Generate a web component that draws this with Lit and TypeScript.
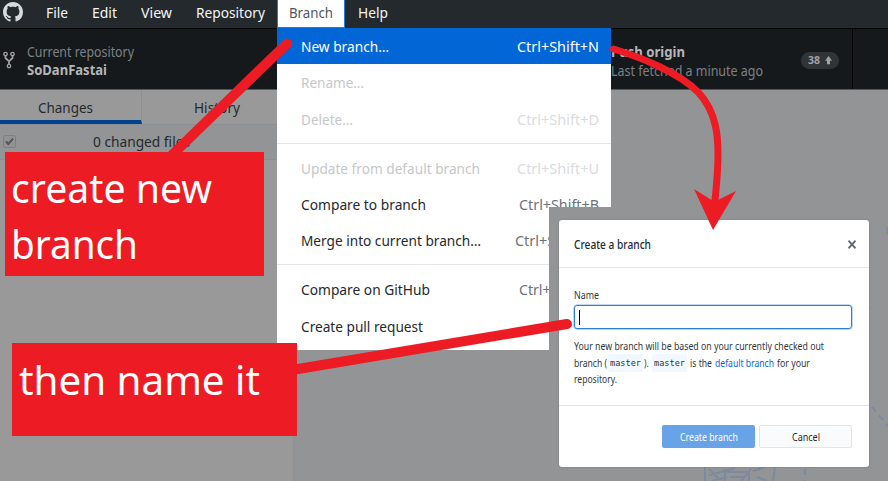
import { LitElement, html, css } from "lit";
import { customElement, property } from "lit/decorators.js";

/* A single-line label squeezed or stretched to a given width. */
@customElement("fit-text")
class FitText extends LitElement {
  @property({ type: Number }) w = 0;
  @property() text = "";
  static styles = css`
    :host { display: inline-block; white-space: pre; flex: none; }
    .t { display: inline-block; transform-origin: 0 50%; }
  `;
  render() {
    return html`<span class="t">${this.text}</span>`;
  }
  updated() {
    const t = this.renderRoot.querySelector(".t") as HTMLElement;
    t.style.transform = "none";
    const natural = t.getBoundingClientRect().width;
    this.style.width = `${this.w}px`;
    t.style.marginRight = `${this.w - natural}px`;
    t.style.transform = `scaleX(${this.w / natural})`;
  }
}

const ft = (text: string, w: number) => html`<fit-text .text=${text} .w=${w}></fit-text>`;

interface Item { label: string; w: number; key?: string; kw?: number; state?: string }

const groups: Item[][] = [
  [
    { label: "New branch…", w: 88, key: "Ctrl+Shift+N", kw: 82, state: "selected" },
    { label: "Rename…", w: 63, state: "disabled" },
    { label: "Delete…", w: 52, key: "Ctrl+Shift+D", kw: 82, state: "disabled" },
  ],
  [
    { label: "Update from default branch", w: 179, key: "Ctrl+Shift+U", kw: 82, state: "disabled" },
    { label: "Compare to branch", w: 125, key: "Ctrl+Shift+B", kw: 80 },
    { label: "Merge into current branch…", w: 180, key: "Ctrl+Shift+M", kw: 84 },
  ],
  [
    { label: "Compare on GitHub", w: 129, key: "Ctrl+Shift+G", kw: 80 },
    { label: "Create pull request", w: 122 },
  ],
];

@customElement("app-root")
class AppRoot extends LitElement {
  static styles = css`
    :host {
      display: block; position: relative; width: 888px; height: 481px; overflow: hidden;
      font-family: "Noto Sans", "Open Sans", sans-serif; font-size: 14px; line-height: 18px; color: #24292e;
    }
    .window { display: flex; flex-direction: column; height: 481px; background: #939495; }
    .menubar { display: flex; align-items: center; height: 28px; flex: none; background: #24292d; color: #f4f5f6; box-sizing: border-box; padding: 0 0 3px 3px; }
    .logo { width: 20px; height: 20px; margin: -2px 23px 0 0; fill: #d6dadf; }
    .menubar fit-text { margin-right: 24px; }
    .branch { align-self: flex-start; box-sizing: border-box; width: 68px; height: 28px; padding: 4px 0 0 11px; margin: 0 13px 0 -12px; background: #fff; color: #50565d; border: 1px solid #2b78d2; border-top: 0; }
    .toolbar { display: flex; height: 62px; flex: none; background: #15191c; border-top: 1px solid #030404; border-bottom: 1px solid #55585b; box-sizing: border-box; color: #b4b6b8; }
    .repo { display: flex; width: 584px; align-items: center; padding-left: 3px; gap: 12px; }
    .fork { width: 12px; height: 18px; margin-top: 2px; fill: none; stroke: #a0a2a3; stroke-width: 1.3; }
    .lines { display: flex; flex-direction: column; padding-top: 4px; }
    .muted { color: #7d8184; }
    .strong { font-weight: 700; font-size: 13.5px; }
    .push { display: flex; flex: none; width: 242px; align-items: center; box-sizing: border-box; padding: 0 13px 0 0; justify-content: space-between; border-right: 1px solid #000; margin-left: 24px; }
    .push .lines { padding-top: 5px; gap: 1px; }
    .badge { display: flex; align-items: center; justify-content: center; gap: 5px; width: 38px; height: 17px; margin-top: 2px; border-radius: 9px; background: #303437; font-size: 11px; font-weight: 700; color: #a0a2a4; }
    .up { width: 7px; height: 9px; fill: #a0a2a4; }
    .sidebar { width: 293px; flex: 1; background: #999; border-right: 1px solid #8e9195; }
    .tabs { display: flex; height: 34px; border-bottom: 1px solid #8c9096; }
    .tab { display: flex; justify-content: center; align-items: center; flex: 1; box-sizing: border-box; padding: 1px 2px 0 0; }
    .tab.on { flex: 0 0 142px; border-right: 1px solid #8c9096; border-bottom: 4px solid #02418d; padding: 5px 10px 0 0; }
    .changes { display: flex; height: 34px; align-items: center; background: #939495; border-bottom: 1px solid #8a8f97; padding-left: 3px; }
    .check { display: block; width: 13px; height: 13px; margin-right: 77px; margin-top: -2px; }
    .menu { position: absolute; left: 277px; top: 28px; width: 334px; height: 322px; background: #fff; box-sizing: border-box; }
    .group { padding: 6px 0 5.5px; border-top: 1px solid #e1e4e8; }
    .group:first-child { padding-top: 0; border: 0; }
    .item { display: flex; justify-content: space-between; align-items: center; height: 36.4px; padding: 1.6px 12.5px 0 24px; box-sizing: border-box; }
    .item .key { color: #6a737d; }
    .item.selected, .item.selected .key { background: #0366d6; color: #fff; }
    .item.disabled { color: #c5c7c9; }
    .item.disabled .key { color: #dadcde; }
    .backdrop { position: absolute; left: 549px; top: 207px; width: 339px; height: 274px; background: #939495; overflow: hidden; }
    .art { position: absolute; left: 0; top: 0; fill: none; stroke: #7b8a9e; stroke-width: 2; }
    .dialog { position: absolute; left: 9.5px; top: 13px; width: 310px; height: 247px; box-sizing: border-box; background: #fff; border-radius: 3px; font-size: 11.5px; color: #30353a; box-shadow: 0 0 2px #777; }
    .head { display: flex; height: 48px; box-sizing: border-box; align-items: center; justify-content: space-between; padding: 2px 12.5px 0 15.5px; border-bottom: 1px solid #e1e4e8; font-size: 12.5px; font-weight: 500; color: #24292e; }
    .close { width: 8px; height: 9px; stroke: #5c6670; stroke-width: 1.8; }
    .body { height: 138px; padding: 19px 16.5px 0 15.5px; border-bottom: 1px solid #e1e4e8; line-height: 16px; box-sizing: border-box; }
    .body > fit-text { display: block; }
    .input { height: 24px; box-sizing: border-box; border: 1px solid #2c7edb; border-radius: 3px; box-shadow: 0 0 0 .5px #7fb0ea; padding: 4px; margin: 2px 0 9px; }
    .caret { width: 1px; height: 15px; background: #000; }
    .para { display: flex; height: 16.6px; align-items: center; }
    .code { display: flex; justify-content: center; align-items: center; width: 35px; height: 18px; border-radius: 2px; background: #f1f8ff; font-family: "DejaVu Sans Mono", monospace; font-size: 9.5px; margin: 0 2.5px 0 1px; }
    .code:first-of-type { margin-right: 1px; }
    .link { color: #0366d6; margin: 0 3px; }
    .foot { display: flex; justify-content: flex-end; gap: 4px; padding: 19px 16.5px 0 0; }
    .btn { display: flex; align-items: center; justify-content: center; width: 93px; height: 23px; box-sizing: border-box; border-radius: 2px; background: #68a3e7; color: #fff; padding-top: 1px; }
    .btn.alt { background: #fafbfc; border: 1px solid #e1e4e8; color: #24292e; }
    .note { position: absolute; box-sizing: border-box; background: #ed1c24; color: #fff; font-size: 40px; line-height: 56px; }
    .note fit-text { display: block; }
    .one { left: 5px; top: 152px; width: 258.5px; height: 123.5px; padding: 7.5px 0 0 6px; }
    .two { left: 12px; top: 343px; width: 285px; height: 92.5px; padding: 9px 0 0 6.5px; }
    .marks { position: absolute; left: 0; top: 0; fill: none; stroke: #ed1c24; stroke-linecap: round; }
    .tip { fill: #ed1c24; stroke: none; }
  `;

  private row(i: Item) {
    return html`<div class="item ${i.state ?? ""}">${ft(i.label, i.w)}${i.key ? html`<span class="key">${ft(i.key, i.kw!)}</span>` : ""}</div>`;
  }

  render() {
    return html`
      <div class="window">
        <div class="menubar">
          <svg class="logo" viewBox="0 0 16 16"><path d="M8 0C3.58 0 0 3.58 0 8c0 3.54 2.29 6.53 5.47 7.59.4.07.55-.17.55-.38 0-.19-.01-.82-.01-1.49-2.01.37-2.53-.49-2.69-.94-.09-.23-.48-.94-.82-1.13-.28-.15-.68-.52-.01-.53.63-.01 1.08.58 1.23.82.72 1.21 1.87.87 2.33.66.07-.52.28-.87.51-1.07-1.78-.2-3.64-.89-3.64-3.95 0-.87.31-1.59.82-2.15-.08-.2-.36-1.02.08-2.12 0 0 .67-.21 2.2.82.64-.18 1.32-.27 2-.27s1.36.09 2 .27c1.53-1.04 2.2-.82 2.2-.82.44 1.1.16 1.92.08 2.12.51.56.82 1.27.82 2.15 0 3.07-1.87 3.75-3.65 3.95.29.25.54.73.54 1.48 0 1.07-.01 1.93-.01 2.2 0 .21.15.46.55.38A8.01 8.01 0 0 0 16 8c0-4.42-3.58-8-8-8z"/></svg>
          ${ft("File", 22)}${ft("Edit", 25)}${ft("View", 31)}${ft("Repository", 69)}
          <div class="branch">${ft("Branch", 44)}</div>
          ${ft("Help", 30)}
        </div>
        <div class="toolbar">
          <div class="repo">
            <svg class="fork" viewBox="0 0 12 18"><circle cx="2.5" cy="3" r="1.7"/><circle cx="9.5" cy="3" r="1.7"/><circle cx="6" cy="15" r="1.7"/><path d="M2.5 4.8V7L6 10.3 9.5 7V4.8M6 10v3.2" stroke-width="1.8"/></svg>
            <div class="lines"><span class="muted">${ft("Current repository", 107)}</span><span class="strong">${ft("SoDanFastai", 80)}</span></div>
          </div>
          <div class="push">
            <div class="lines"><span class="strong">${ft("Push origin", 74)}</span><span class="muted">${ft("Last fetched a minute ago", 152)}</span></div>
            <div class="badge">${ft("38", 12)}<svg class="up" viewBox="0 0 7 9"><path d="M3.5 0 7 4.8H5V8.2H2V4.8H0z"/></svg></div>
          </div>
        </div>
        <div class="sidebar">
          <div class="tabs"><div class="tab on">${ft("Changes", 55)}</div><div class="tab">${ft("History", 46)}</div></div>
          <div class="changes">
            <svg class="check" viewBox="0 0 13 13"><rect x=".5" y=".5" width="12" height="12" rx="1.5" fill="#929292" stroke="#808080"/><path d="M3 6.5 5.3 9 10 3.6" fill="none" stroke="#555" stroke-width="2"/></svg>
            ${ft("0 changed files", 97)}
          </div>
        </div>
      </div>
      <div class="menu">${groups.map((g) => html`<div class="group">${g.map((i) => this.row(i))}</div>`)}</div>
      <div class="backdrop">
        <svg class="art" width="339" height="274"><path d="M156 258V274M160 262 170 272M160 268 176 264 186 261M163 274 178 270M176 262V274M178 265H200V274M202 262 192 274M204 264 216 260M208 270 218 274M226 260 224 274M181 270H194"/><path d="M256 262V274M323 200 339 219" stroke-dasharray="6 5"/><path d="M338.5 20V27M320 100V103"/></svg>
        <div class="dialog">
          <div class="head">${ft("Create a branch", 77)}<svg class="close" viewBox="0 0 8 9"><path d="M.5.7 7.5 8.3M7.5.7.5 8.3"/></svg></div>
          <div class="body">
            ${ft("Name", 25)}
            <div class="input"><div class="caret"></div></div>
            <div class="para">${ft("Your new branch will be based on your currently checked out", 250)}</div>
            <div class="para">${ft("branch (", 33)}<span class="code">${ft("master", 31)}</span>${ft("). ", 7)}<span class="code">${ft("master", 31)}</span>${ft("is the", 22)}<span class="link">${ft("default branch", 59)}</span>${ft("for your", 33)}</div>
            <div class="para">${ft("repository.", 43)}</div>
          </div>
          <div class="foot"><div class="btn">${ft("Create branch", 58)}</div><div class="btn alt">${ft("Cancel", 28)}</div></div>
        </div>
      </div>
      <div class="note one">${ft("create new", 201)}${ft("branch", 127)}</div>
      <div class="note two">${ft("then name it", 241)}</div>
      <svg class="marks" width="888" height="481">
        <path d="M287 43.5 172 155" stroke-width="10"/>
        <path d="M295 369.5 567 324" stroke-width="10"/>
        <path d="M613.5 49C640 57 678 72 698 92C718 113 718 141 718 155C718 175 715.5 195 714 210" stroke-width="7"/>
        <path class="tip" d="M694 189 711.5 200 716 201 736 191 713 230z"/>
      </svg>
    `;
  }
}
